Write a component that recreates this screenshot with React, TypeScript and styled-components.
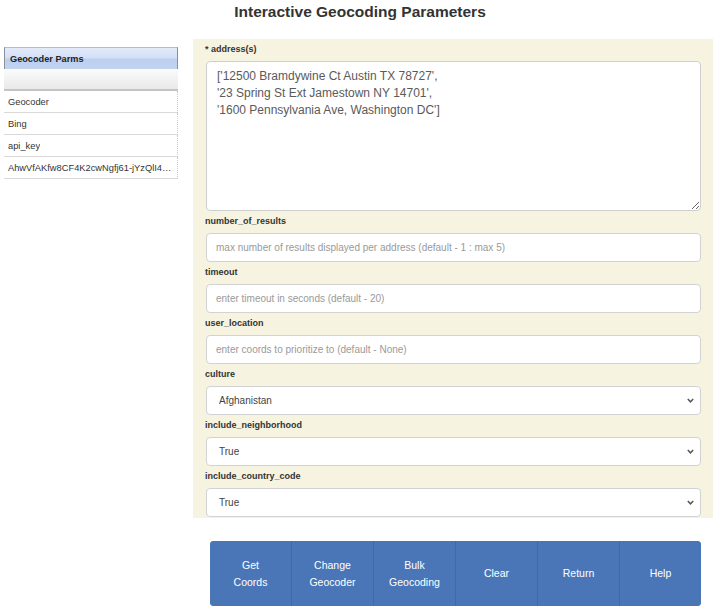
import React from "react";
import styled, { createGlobalStyle } from "styled-components";

const GlobalStyle = createGlobalStyle`
  html, body { margin: 0; padding: 0; background: #ffffff; }
  body { font-family: "Liberation Sans", Arial, sans-serif; color: #333; }
  * { box-sizing: border-box; }
`;

const Page = styled.div`
  width: 720px;
  height: 612px;
  overflow: hidden;
`;

const Title = styled.h1`
  margin: 0;
  height: 39px;
  padding-top: 3px;
  text-align: center;
  font-size: 15.5px;
  line-height: 18px;
  font-weight: bold;
  color: #333;
`;

const Body = styled.div`
  display: flex;
  align-items: flex-start;
  padding-left: 4px;
  gap: 15px;
`;

const Sidebar = styled.div`
  width: 174px;
  margin-top: 8px;
  font-size: 9.3px;
`;

const SideHeader = styled.div`
  height: 22px;
  display: flex;
  align-items: center;
  padding-left: 5px;
  font-weight: bold;
  font-size: 9.2px;
  color: #222;
  border: 1px solid #8a8f99;
  border-top-color: #b5bccb;
  border-bottom: none;
  background: linear-gradient(#e3ebf9 0%, #d3e0f6 45%, #bccff0 55%, #c3d4f2 100%);
`;

const SideSub = styled.div`
  height: 22px;
  background: linear-gradient(#fbfbfb, #e9e9e9);
  border-bottom: 2px solid #c4c4c4;
`;

const SideRow = styled.div`
  height: 22px;
  display: flex;
  align-items: center;
  padding-left: 4px;
  padding-right: 3px;
  color: #333;
  border-bottom: 1px solid #d9d9d9;
  border-right: 1px dotted #c8c8c8;
  white-space: nowrap;
  overflow: hidden;
  span {
    overflow: hidden;
    text-overflow: ellipsis;
  }
`;

const Main = styled.div`
  width: 520px;
  display: flex;
  flex-direction: column;
`;

const Panel = styled.div`
  background: #f6f4e1;
  padding: 0 13px 1px 12px;
  display: flex;
  flex-direction: column;
`;

const Label = styled.div`
  height: 22px;
  padding-top: 4px;
  font-size: 9px;
  line-height: 13px;
  font-weight: bold;
  color: #333;
`;

const TextArea = styled.textarea`
  display: block;
  width: 495px;
  margin-left: 1px;
  height: 150px;
  border: 1px solid #cfcfcf;
  border-radius: 4px;
  padding: 6px 10px;
  font-family: "Liberation Sans", Arial, sans-serif;
  font-size: 12px;
  line-height: 17px;
  color: #5a5a5a;
  background: #fff;
  resize: both;
  outline: none;
`;

const Input = styled.input`
  display: block;
  width: 495px;
  margin-left: 1px;
  height: 29px;
  border: 1px solid #d2d2d2;
  border-radius: 4px;
  padding: 0 9px;
  font-family: "Liberation Sans", Arial, sans-serif;
  font-size: 10px;
  color: #555;
  background: #fff;
  outline: none;
  &::placeholder { color: #9a9a9a; }
`;

const SelectWrap = styled.div`
  position: relative;
  width: 495px;
  margin-left: 1px;
  height: 29px;
`;

const Select = styled.select`
  appearance: none;
  -webkit-appearance: none;
  display: block;
  width: 100%;
  height: 29px;
  border: 1px solid #d2d2d2;
  border-radius: 4px;
  padding: 0 12px;
  font-family: "Liberation Sans", Arial, sans-serif;
  font-size: 10px;
  color: #444;
  background: #fff;
  outline: none;
`;

const Chevron = styled.svg`
  position: absolute;
  right: 7px;
  top: 12px;
  width: 7px;
  height: 5px;
  pointer-events: none;
`;

const ButtonBar = styled.div`
  margin-top: 23px;
  margin-left: 17px;
  width: 491px;
  height: 65px;
  display: flex;
  border-radius: 4px;
  overflow: hidden;
  background: #4a76b8;
`;

const Button = styled.button`
  flex: 1;
  border: none;
  border-left: 1px solid #3f69a8;
  background: #4a76b8;
  color: #fff;
  font-family: "Liberation Sans", Arial, sans-serif;
  font-size: 10.5px;
  line-height: 17px;
  padding: 0;
  cursor: pointer;
  &:first-child { border-left: none; }
`;

const ChevronIcon = () => (
  <Chevron viewBox="0 0 7 5">
    <path d="M0.8 1 L3.5 3.8 L6.2 1" fill="none" stroke="#555" strokeWidth="1.5" />
  </Chevron>
);

const DropDown = ({ value, options }: { value: string; options: string[] }) => (
  <SelectWrap>
    <Select defaultValue={value}>
      {options.map((o) => (
        <option key={o}>{o}</option>
      ))}
    </Select>
    <ChevronIcon />
  </SelectWrap>
);

const sideRows = ["Geocoder", "Bing", "api_key", "AhwVfAKfw8CF4K2cwNgfj61-jYzQlI4xKhIbDmcI2ZGkSsXvV"];

const buttons: string[][] = [
  ["Get", "Coords"],
  ["Change", "Geocoder"],
  ["Bulk", "Geocoding"],
  ["Clear"],
  ["Return"],
  ["Help"],
];

export default function App() {
  return (
    <Page>
      <GlobalStyle />
      <Title>Interactive Geocoding Parameters</Title>
      <Body>
        <Sidebar>
          <SideHeader>Geocoder Parms</SideHeader>
          <SideSub />
          {sideRows.map((r) => (
            <SideRow key={r}>
              <span>{r}</span>
            </SideRow>
          ))}
        </Sidebar>
        <Main>
          <Panel>
            <Label>* address(s)</Label>
            <TextArea
              defaultValue={"['12500 Bramdywine Ct Austin TX 78727',\n'23 Spring St Ext Jamestown NY 14701',\n'1600 Pennsylvania Ave, Washington DC']"}
            />
            <Label>number_of_results</Label>
            <Input placeholder="max number of results displayed per address (default - 1 : max 5)" />
            <Label>timeout</Label>
            <Input placeholder="enter timeout in seconds (default - 20)" />
            <Label>user_location</Label>
            <Input placeholder="enter coords to prioritize to (default - None)" />
            <Label>culture</Label>
            <DropDown value="Afghanistan" options={["Afghanistan", "Albania", "Algeria"]} />
            <Label>include_neighborhood</Label>
            <DropDown value="True" options={["True", "False"]} />
            <Label>include_country_code</Label>
            <DropDown value="True" options={["True", "False"]} />
          </Panel>
          <ButtonBar>
            {buttons.map((b) => (
              <Button key={b.join(" ")}>
                {b.map((line, i) => (
                  <React.Fragment key={line}>
                    {i > 0 && <br />}
                    {line}
                  </React.Fragment>
                ))}
              </Button>
            ))}
          </ButtonBar>
        </Main>
      </Body>
    </Page>
  );
}
